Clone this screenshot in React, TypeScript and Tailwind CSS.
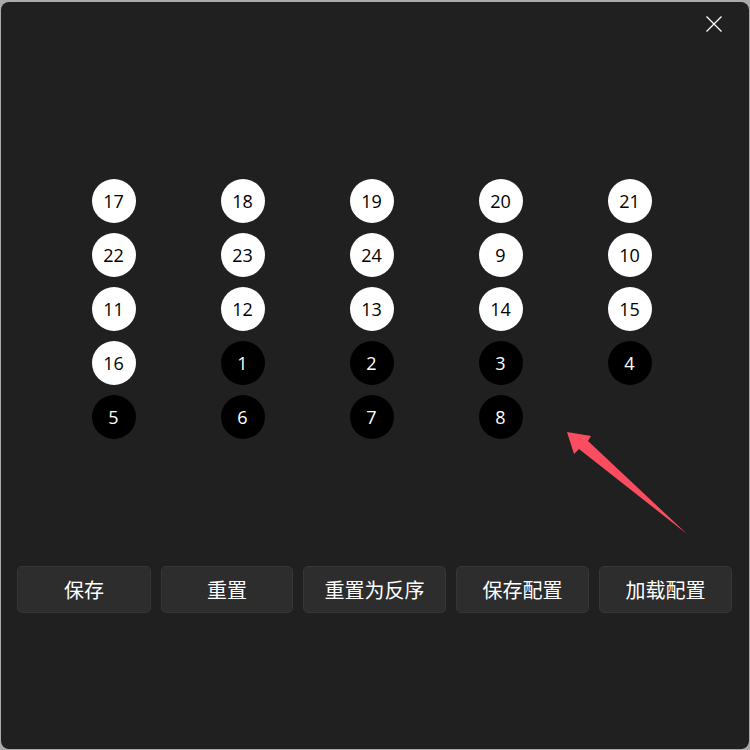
import React from "react";

const rows: number[][] = [
  [17, 18, 19, 20, 21],
  [22, 23, 24, 9, 10],
  [11, 12, 13, 14, 15],
  [16, 1, 2, 3, 4],
  [5, 6, 7, 8],
];

const buttons = [
  { label: "保存", w: "w-[134px]" },
  { label: "重置", w: "w-[132px]" },
  { label: "重置为反序", w: "w-[143px]" },
  { label: "保存配置", w: "w-[133px]" },
  { label: "加载配置", w: "w-[133px]" },
];

const Dot = ({ n }: { n: number }) => {
  const light = n > 8;
  return (
    <div
      className={`w-[44px] h-[44px] rounded-full flex items-center justify-center text-[18px] ${
        light ? "bg-white text-black" : "bg-black text-white"
      }`}
    >
      {n}
    </div>
  );
};

export default function App() {
  return (
    <div className="w-[750px] h-[750px] bg-[#ababab] p-[1px] pt-[2px]">
      <div
        className="relative h-full bg-[#202020] rounded-[8px] flex flex-col"
        style={{ fontFamily: '"Open Sans", "Noto Sans CJK SC", sans-serif' }}
      >
        <div className="flex justify-end pt-[11px] pr-[24px]">
          <button className="w-[22px] h-[22px] flex items-center justify-center text-white">
            <svg width="18" height="18" viewBox="0 0 18 18" fill="none" stroke="white" strokeWidth="1.3">
              <path d="M1.5 1.5 L16.5 16.5 M16.5 1.5 L1.5 16.5" />
            </svg>
          </button>
        </div>

        <div className="mt-[144px] ml-[48px] w-[645px] grid grid-cols-5 gap-y-[10px]">
          {rows.flatMap((r, i) =>
            [0, 1, 2, 3, 4].map((j) => (
              <div key={`${i}-${j}`} className="flex justify-center">
                {r[j] !== undefined ? <Dot n={r[j]} /> : <div className="h-[44px]" />}
              </div>
            ))
          )}
        </div>

        <div className="mt-[127px] ml-[16px] flex gap-[10px]">
          {buttons.map((b) => (
            <button
              key={b.label}
              className={`${b.w} h-[47px] rounded-[5px] bg-[#2d2d2d] border border-[#363636] text-white text-[20px]`}
              style={{ fontFamily: '"Noto Sans CJK SC", sans-serif' }}
            >
              {b.label}
            </button>
          ))}
        </div>

        <svg className="absolute left-0 top-0 pointer-events-none" width="748" height="746" viewBox="0 0 748 746">
          <polygon
            points="566,430 590,434 587,439 686,532 578,447 573,452"
            fill="#fb4d5f"
          />
        </svg>
      </div>
    </div>
  );
}
